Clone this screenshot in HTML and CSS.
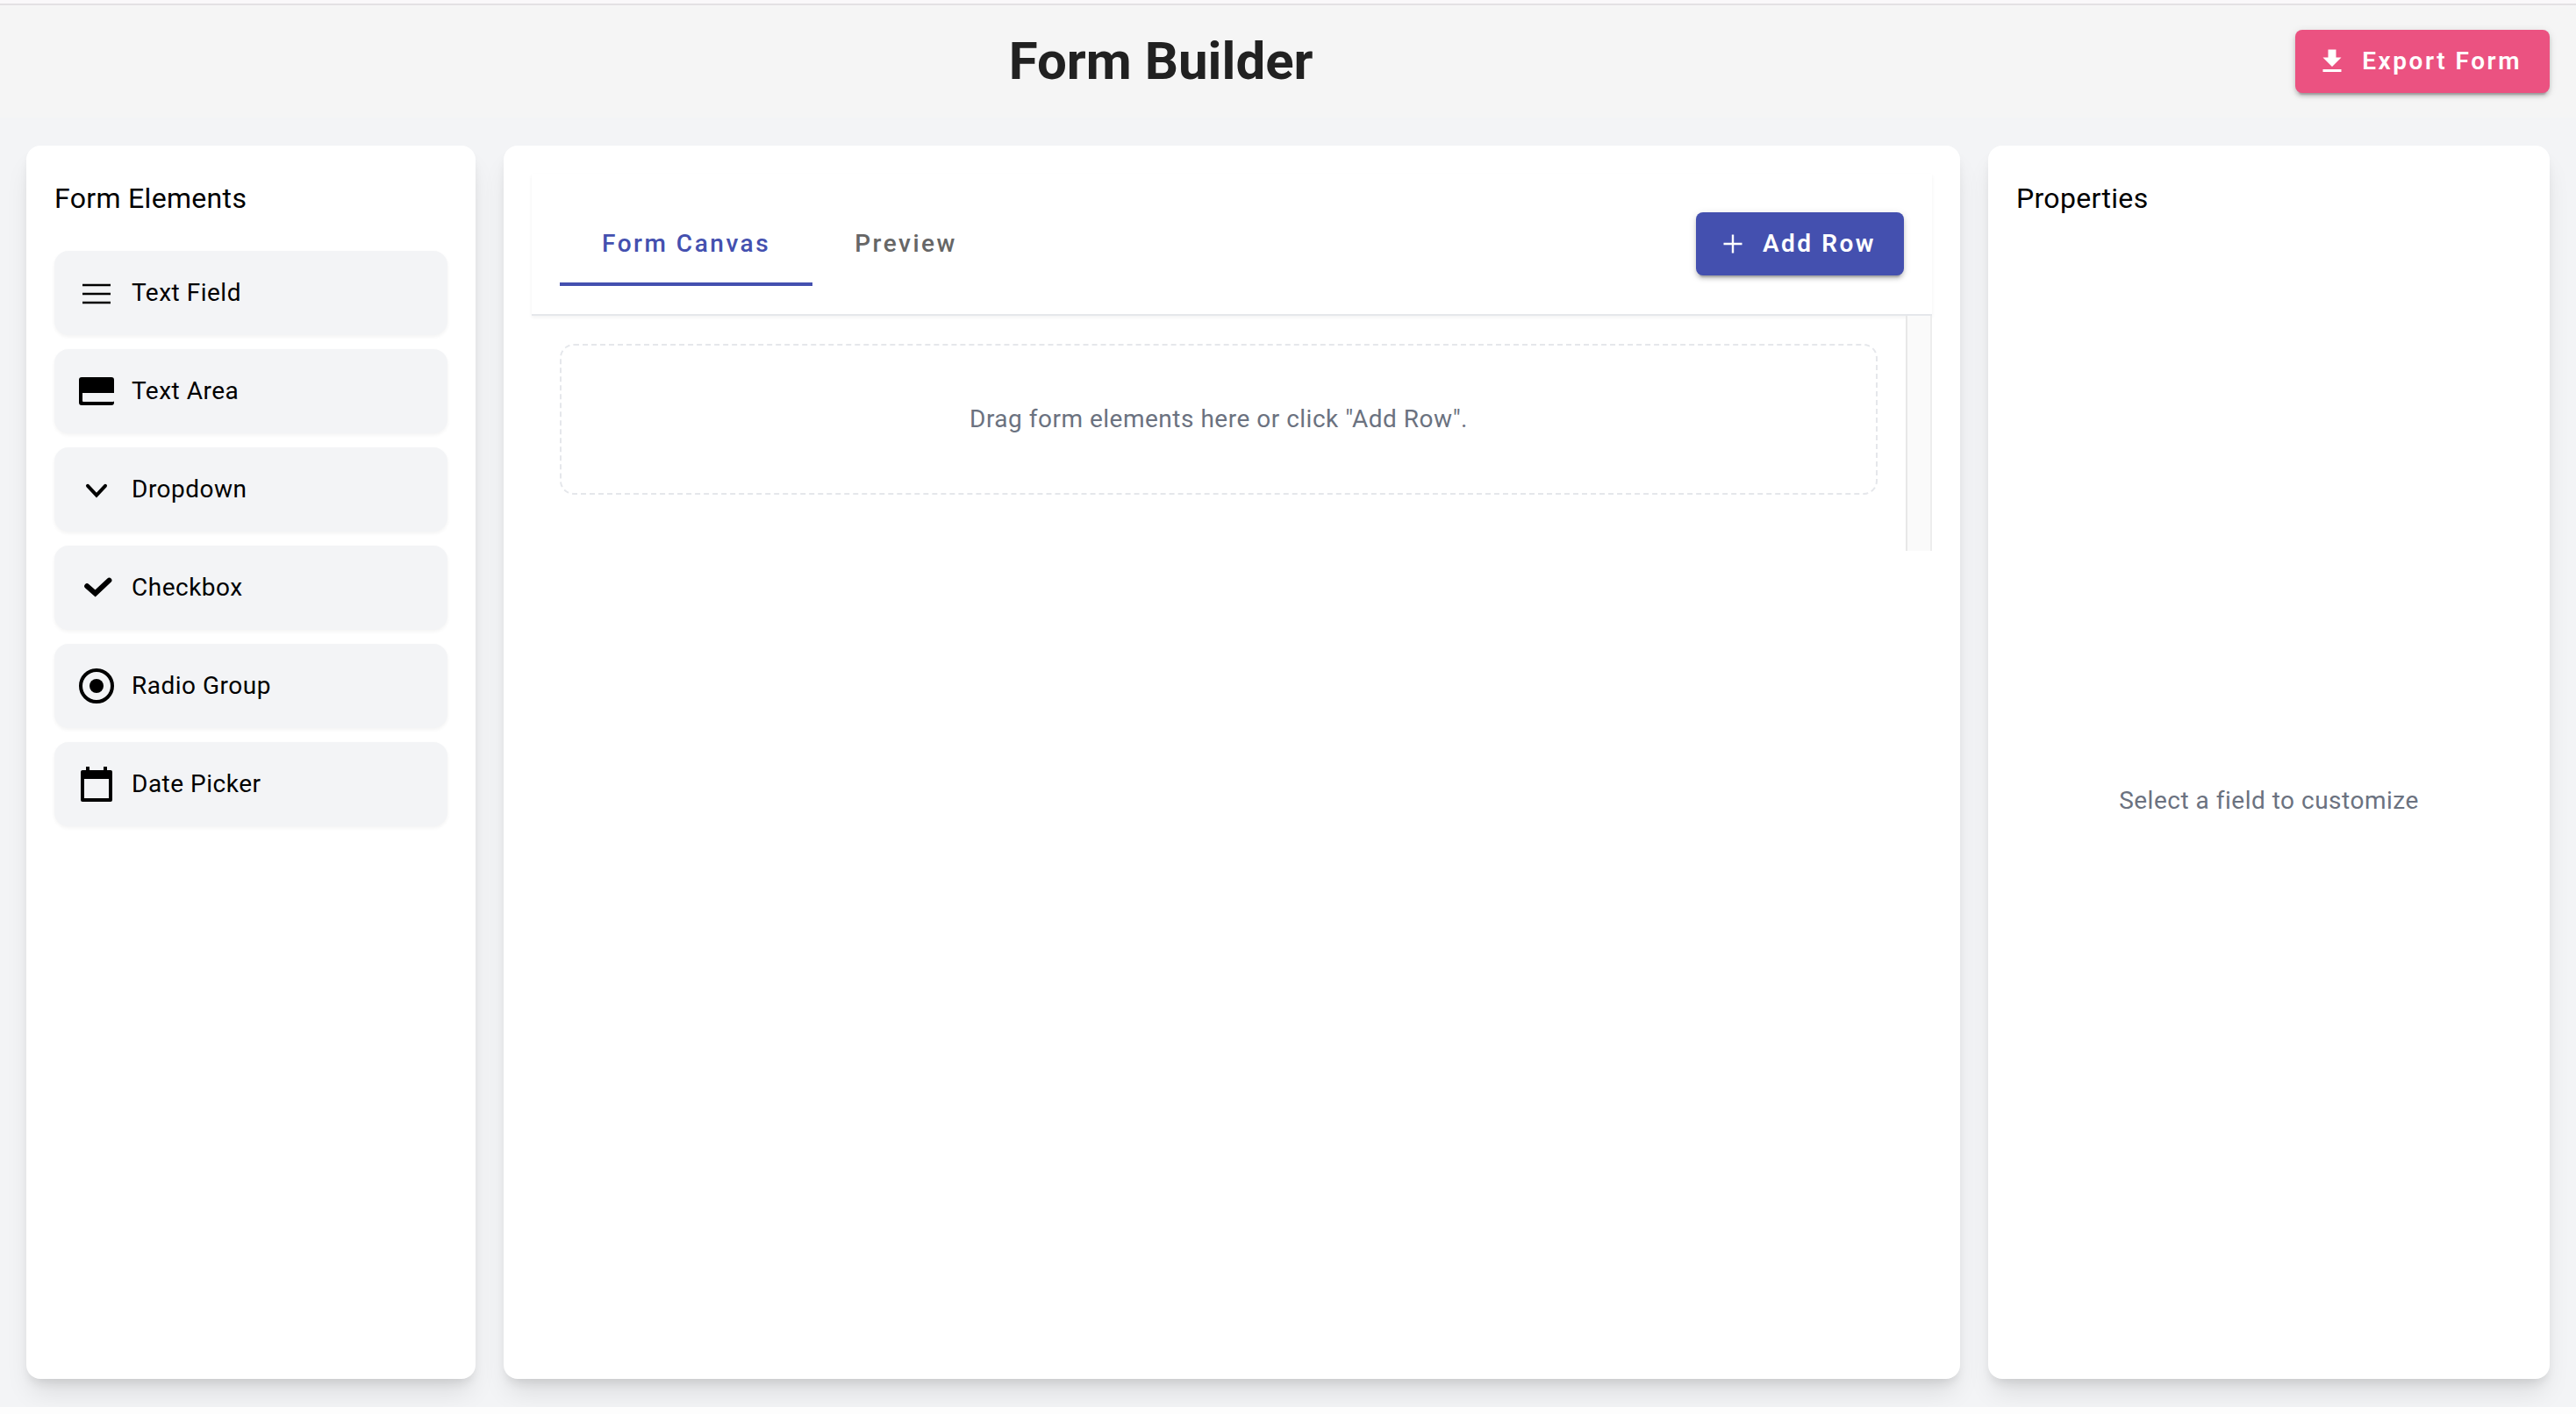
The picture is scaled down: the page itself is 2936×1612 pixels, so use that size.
FILE: index.html
```html
<!DOCTYPE html>
<html lang="en">
<head>
<meta charset="utf-8">
<title>Form Builder</title>
<link rel="stylesheet" href="styles.css">
</head>
<body>
<header class="app-bar">
  <h1 class="app-title">Form Builder</h1>
  <button type="button" class="btn btn-accent">
    <svg class="btn-icon" viewBox="0 0 24 24" aria-hidden="true"><path d="M19 9h-4V3H9v6H5l7 7 7-7zM5 18v2h14v-2H5z"/></svg>
    <span>Export Form</span>
  </button>
</header>
<main class="workspace">
  <aside class="panel panel-elements">
    <h2 class="panel-title">Form Elements</h2>
    <ul class="element-list">
      <li class="element" draggable="true">
        <svg class="element-icon" viewBox="0 0 24 24" aria-hidden="true"><path d="M4 6.900h16v1.200H4zM4 11.900h16v1.200H4zM4 16.900h16v1.200H4z"/></svg>
        <span>Text Field</span>
      </li>
      <li class="element" draggable="true">
        <svg class="element-icon" viewBox="0 0 24 24" aria-hidden="true"><path d="M22 13H4v4.500q0 .5.5.5H21.500q.5 0 .5-.5V18.500q0 1.500-1.500 1.500h-17Q2 20 2 18.500v-13Q2 4 3.500 4h17Q22 4 22 5.500z"/></svg>
        <span>Text Area</span>
      </li>
      <li class="element" draggable="true">
        <svg class="element-icon" viewBox="0 0 24 24" aria-hidden="true"><path class="stroke" d="M7 9.900l5 5.400 5-5.400"/></svg>
        <span>Dropdown</span>
      </li>
      <li class="element" draggable="true">
        <svg class="element-icon" viewBox="0 0 24 24" aria-hidden="true"><path class="stroke stroke-bold" d="M6.600 11.100l4.700 4.100 7.900-7.400"/></svg>
        <span>Checkbox</span>
      </li>
      <li class="element" draggable="true">
        <svg class="element-icon" viewBox="0 0 24 24" aria-hidden="true"><circle class="stroke" cx="12" cy="12" r="9"/><circle cx="12" cy="12" r="4"/></svg>
        <span>Radio Group</span>
      </li>
      <li class="element" draggable="true">
        <svg class="element-icon" viewBox="0 0 24 24" aria-hidden="true"><path d="M20 4h-2V2h-2v2H8V2H6v2H4q-1 0-1 1v16q0 1 1 1h16q1 0 1-1V5q0-1-1-1zm-1 16H5V9h14z"/></svg>
        <span>Date Picker</span>
      </li>
    </ul>
  </aside>
  <section class="panel panel-canvas">
    <div class="toolbar">
      <div class="tabs" role="tablist">
        <button type="button" class="tab tab-active" role="tab" aria-selected="true">Form Canvas</button>
        <button type="button" class="tab" role="tab" aria-selected="false">Preview</button>
      </div>
      <button type="button" class="btn btn-primary">
        <svg class="btn-icon" viewBox="0 0 24 24" aria-hidden="true"><path d="M19 12.800h-6.200V19h-1.600v-6.200H5v-1.600h6.200V5h1.600v6.200H19z"/></svg>
        <span>Add Row</span>
      </button>
    </div>
    <div class="canvas">
      <div class="canvas-body">
        <p class="drop-zone">Drag form elements here or click "Add Row".</p>
      </div>
      <div class="scroll-track" aria-hidden="true"></div>
    </div>
  </section>
  <aside class="panel panel-properties">
    <h2 class="panel-title">Properties</h2>
    <p class="empty-note">Select a field to customize</p>
  </aside>
</main>
</body>
</html>
```
FILE: styles.css
```css
* {
  box-sizing: border-box;
  margin: 0;
  padding: 0;
}

body {
  display: flex;
  flex-direction: column;
  min-height: 100vh;
  padding-bottom: 8px;
  border-top: 4px solid #faf8fa;
  background: #fdfdfd;
  color: #000;
  font-family: Roboto, "Liberation Sans", sans-serif;
  font-size: 28px;
  line-height: 40px;
  letter-spacing: 0.018em;
}

button {
  border: 0;
  background: none;
  font: inherit;
  font-weight: 500;
  letter-spacing: 0.09em;
  cursor: pointer;
}

.app-bar {
  display: flex;
  align-items: center;
  height: 130px;
  padding: 0 30px;
  border-top: 2px solid #e3e1e3;
  background: #f5f5f5;
}

.app-title {
  flex: 1;
  color: #212121;
  font-size: 60px;
  font-weight: 700;
  line-height: 72px;
  letter-spacing: normal;
  text-align: center;
}

.btn {
  display: flex;
  align-items: center;
  gap: 16px;
  height: 72px;
  padding: 0 32px 0 24px;
  border-radius: 8px;
  box-shadow: 0 6px 2px -4px rgba(0, 0, 0, 0.2), 0 4px 4px rgba(0, 0, 0, 0.14), 0 2px 10px rgba(0, 0, 0, 0.12);
  color: #fff;
  font-weight: 600;
}

.btn-accent {
  background: #eb5281;
}

.btn-primary {
  background: #4450af;
}

.btn-icon {
  width: 36px;
  height: 36px;
  fill: currentColor;
}

.workspace {
  display: flex;
  flex: 1;
  gap: 32px;
  padding: 32px 30px;
  overflow: hidden;
  background: #f3f4f6;
}

.panel {
  display: flex;
  flex-direction: column;
  padding: 32px;
  border-radius: 16px;
  background: #fff;
  box-shadow: 0 20px 30px -6px rgba(0, 0, 0, 0.1), 0 8px 12px -4px rgba(0, 0, 0, 0.1);
}

.panel-elements {
  flex: 0 0 512px;
}

.panel-canvas {
  flex: 1;
}

.panel-properties {
  flex: 0 0 640px;
}

.panel-title {
  margin-bottom: 32px;
  font-size: 32px;
  font-weight: 400;
  line-height: 56px;
  letter-spacing: 0.01em;
}

.element-list {
  display: flex;
  flex-direction: column;
  gap: 16px;
  list-style: none;
}

.element {
  display: flex;
  align-items: center;
  gap: 16px;
  padding: 24px;
  border-radius: 16px;
  background: #f3f4f6;
  box-shadow: 0 2px 4px rgba(0, 0, 0, 0.05);
  cursor: move;
}

.element-icon {
  width: 48px;
  height: 48px;
}

.stroke {
  fill: none;
  stroke: #000;
  stroke-width: 2;
  stroke-linecap: round;
}

.stroke-bold {
  stroke-width: 3;
}

.toolbar {
  display: flex;
  align-items: center;
  justify-content: space-between;
  padding: 32px;
  border-bottom: 2px solid #e5e7eb;
  box-shadow: 0 2px 4px rgba(0, 0, 0, 0.05);
}

.tabs {
  display: flex;
}

.tab {
  height: 96px;
  padding: 0 48px;
  border-top: 4px solid transparent;
  border-bottom: 4px solid transparent;
  color: #666;
}

.tab-active {
  border-bottom-color: #4450af;
  color: #4450af;
}

.canvas {
  display: flex;
}

.canvas-body {
  flex: 1;
  padding: 32px 32px 64px;
}

.drop-zone {
  padding: 64px 32px;
  border: 2px dashed #e5e7eb;
  border-radius: 16px;
  color: #6b7280;
  text-align: center;
}

.scroll-track {
  width: 30px;
  border-right: 2px solid #ededed;
  border-left: 2px solid #e8e8e8;
  background: #fafafa;
}

.empty-note {
  display: flex;
  flex: 1;
  align-items: center;
  justify-content: center;
  color: #6b7280;
}
```
